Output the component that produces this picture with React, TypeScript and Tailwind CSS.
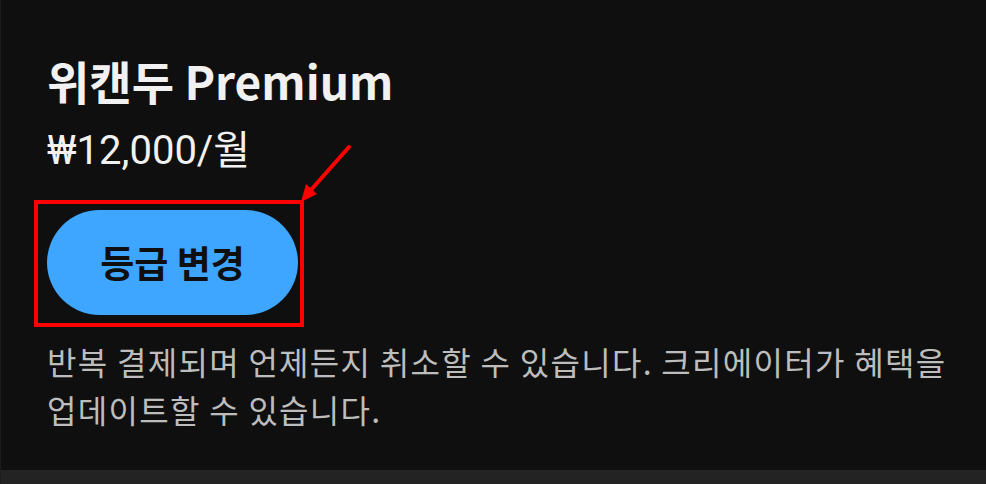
import React from "react";

export default function App() {
  return (
    <div className="w-[986px] h-[484px] bg-[#0f0f0f] flex flex-col overflow-hidden relative border-l border-[#1c1c1c]">
      <div className="flex-1 flex flex-col pl-[46px] pt-[52px]" style={{ fontFamily: '"Noto Sans CJK KR", "Noto Sans", sans-serif' }}>
        <h1 className="text-[46px] leading-[56px] font-bold text-[#f1f1f1]">위캔두 Premium</h1>
        <div className="text-[40px] leading-[48px] text-[#f1f1f1] mt-[19px]" style={{ fontFamily: 'Roboto, "Noto Sans CJK KR", sans-serif' }}>₩12,000/월</div>
        <div className="mt-[35px] relative w-[251px]">
          <button className="w-[251px] h-[105px] rounded-full bg-[#3ea6ff] text-[#0f0f0f] text-[37px] font-semibold flex items-center justify-center">
            등급 변경
          </button>
        </div>
        <p className="mt-[22px] text-[32px] leading-[48px] text-[#bdbdbd] w-[920px] tracking-[1.3px]">
          반복 결제되며 언제든지 취소할 수 있습니다. 크리에이터가 혜택을 업데이트할 수 있습니다.
        </p>
      </div>
      <div className="h-[14px] bg-[#232323]" />
      <div className="absolute left-[33px] top-[200px] w-[270px] h-[127px] border-4 border-[#ff0000]" />
      <svg className="absolute left-0 top-0" width="986" height="484" viewBox="0 0 986 484">
        <line x1="348" y1="147" x2="309" y2="191" stroke="#ff0000" strokeWidth="4" strokeLinecap="round" />
        <polygon points="300,202 316,194 305,184" fill="#ff0000" />
      </svg>
    </div>
  );
}
